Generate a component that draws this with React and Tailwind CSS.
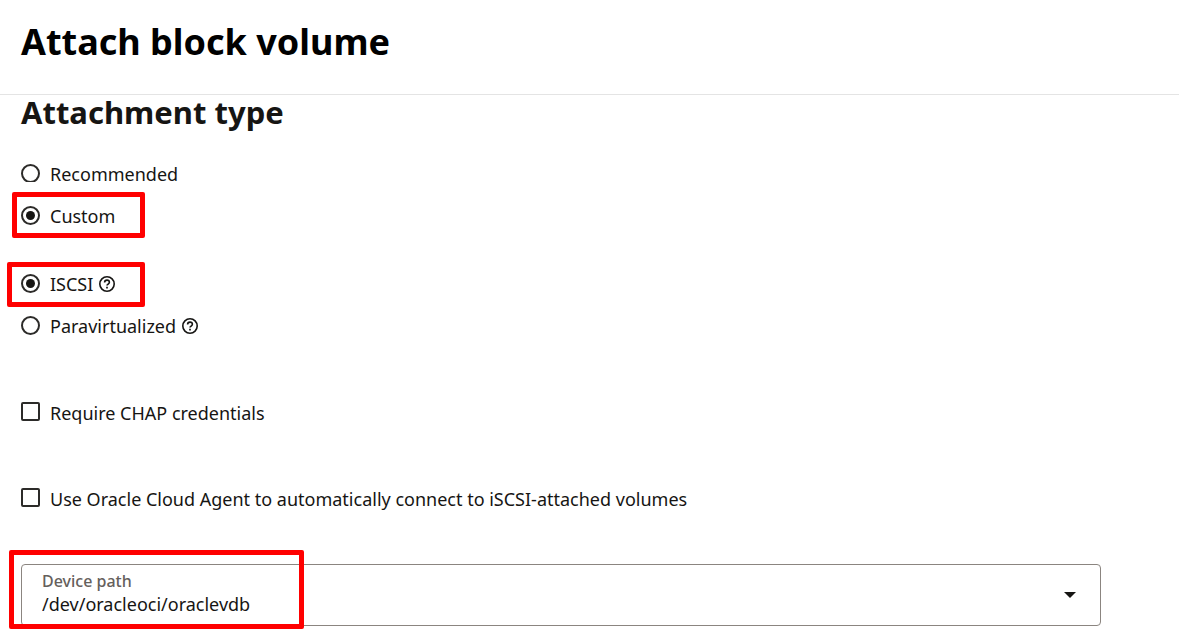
import React from "react";

function HelpIcon() {
  return (
    <svg viewBox="0 0 16 16" className="size-4" fill="none" stroke="#161513" aria-hidden="true">
      <circle cx="8" cy="8" r="7.2" strokeWidth="1.6" />
      <path d="M5.6 6.4C5.6 5 6.6 4.1 8 4.1s2.4.9 2.4 2.2c0 1.7-2.4 1.8-2.4 3.3" strokeWidth="1.6" />
      <path d="M8 10.8v1.7" strokeWidth="1.7" />
    </svg>
  );
}

function Highlight({ className }) {
  return (
    <span
      aria-hidden="true"
      className={"pointer-events-none absolute rounded-xs border-5 border-[#ff0000] " + className}
    />
  );
}

function Radio({ id, name, label, checked, help, clipped, highlight }) {
  return (
    <div className="relative flex h-[42px] items-center">
      <span className={"relative mb-px flex size-[19px] items-center justify-center " + (clipped ? "[clip-path:inset(0_0_1px_0)]" : "")}>
        <input
          id={id}
          type="radio"
          name={name}
          defaultChecked={checked}
          className="peer size-[19px] appearance-none rounded-full border-2 border-[#2c2b29]"
        />
        <span className="pointer-events-none absolute hidden size-[9px] rounded-full bg-[#161513] peer-checked:block" />
      </span>
      <label htmlFor={id} className="pl-[10px]">{label}</label>
      {help && (
        <button type="button" aria-label={"Help for " + label} className="ml-[6px]">
          <HelpIcon />
        </button>
      )}
      {highlight && <Highlight className={highlight} />}
    </div>
  );
}

function Checkbox({ id, label }) {
  return (
    <div className="flex h-[42px] items-center">
      <input
        id={id}
        type="checkbox"
        className="mb-px size-[19px] appearance-none rounded-xs border-2 border-[#2c2b29] checked:bg-[#161513]"
      />
      <label htmlFor={id} className="pt-[2px] pl-[10px]">{label}</label>
    </div>
  );
}

export default function App() {
  return (
    <div className="min-h-screen bg-white font-['Noto_Sans',sans-serif] text-[18px] leading-6 text-[#161513]">
      <header className="border-b border-[#e4e4e4] px-[21px] pt-[18px] pb-7">
        <h1 className="text-[36px] leading-[48px] font-bold text-black">Attach block volume</h1>
      </header>
      <main className="pr-[78px] pb-3 pl-[21px]">
        <h2 className="text-[31px] leading-[34px] font-bold">Attachment type</h2>
        <form>
          <div className="pt-6">
            <Radio id="recommended" name="mode" label="Recommended" clipped />
            <Radio id="custom" name="mode" label="Custom" checked highlight="-top-[3px] -left-[9px] h-[46px] w-[133px]" />
          </div>
          <div className="pt-[26px]">
            <Radio id="iscsi" name="type" label="ISCSI" checked help highlight="-top-px -left-[14px] h-[45px] w-[138px]" />
            <Radio id="paravirtualized" name="type" label="Paravirtualized" help />
          </div>
          <div className="flex flex-col gap-11 pt-11">
            <Checkbox id="chap" label="Require CHAP credentials" />
            <Checkbox id="agent" label="Use Oracle Cloud Agent to automatically connect to iSCSI-attached volumes" />
          </div>
          <div className="pt-[45px]">
            <div className="relative rounded-sm border border-[#8b8580] pt-[6px] pb-[9px]">
              <label htmlFor="device" className="block px-5 text-[16px] leading-5 font-medium text-[#65605c]">
                Device path
              </label>
              <select
                id="device"
                className="block h-[25px] w-full appearance-none bg-transparent px-5 leading-6"
              >
                <option>/dev/oracleoci/oraclevdb</option>
              </select>
              <svg viewBox="0 0 12 6" className="pointer-events-none absolute top-[27px] right-6 h-[6px] w-3" aria-hidden="true">
                <path d="M0 0h12L6 6z" fill="#161513" />
              </svg>
              <Highlight className="-top-[15px] -left-[13px] h-[79px] w-[295px]" />
            </div>
          </div>
        </form>
      </main>
    </div>
  );
}
